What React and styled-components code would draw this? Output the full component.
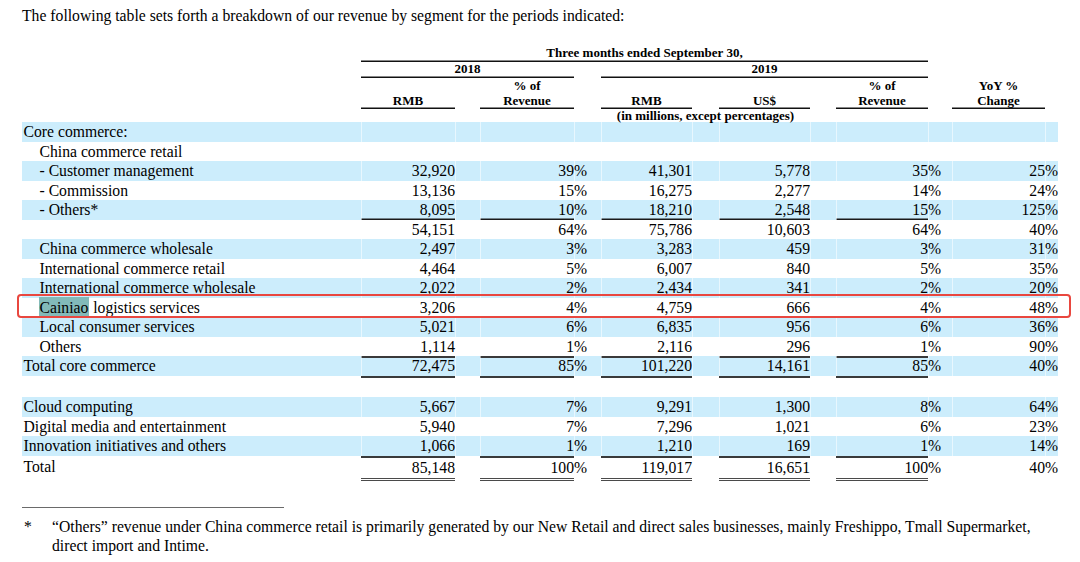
import React from 'react';
import styled, { createGlobalStyle } from 'styled-components';

const GlobalStyle = createGlobalStyle`
  html, body {
    margin: 0;
    padding: 0;
    background: #fff;
  }
  body {
    font-family: "Liberation Serif", "Times New Roman", serif;
    color: #000;
  }
`;

// label | c1 s1 | c2 s2 | c3 s3 | c4 s4 | c5 s5 | c6 s6
const COLS = '339px 94px 25px 94px 27px 91px 27px 91px 26px 92px 24px 93px 13px';

const Page = styled.div`
  width: 1080px;
  height: 562px;
  box-sizing: border-box;
  padding: 6px 22px 0;
  overflow: hidden;
`;

const Intro = styled.p`
  margin: 0 0 14px;
  font-size: 15.7px;
  line-height: 20px;
`;

const Table = styled.div`
  width: 1036px;
`;

const HeadRow = styled.div`
  display: grid;
  grid-template-columns: ${COLS};
  height: ${(p) => p.$h}px;
`;

const HeadCell = styled.div`
  grid-column: ${(p) => p.$col};
  display: flex;
  flex-direction: column;
  justify-content: ${(p) => (p.$middle ? 'center' : 'flex-end')};
  align-items: center;
  font-weight: bold;
  font-size: 13px;
  line-height: ${(p) => p.$lh || 14}px;
  padding-bottom: ${(p) => p.$pb || 0}px;
  white-space: nowrap;
  box-shadow: ${(p) => (p.$rule ? 'inset 0 -1.5px 0 #111' : 'none')};
`;

const Row = styled.div`
  display: grid;
  grid-template-columns: ${COLS};
  height: ${(p) => p.$h || 19.5}px;
  background: ${(p) => (p.$shaded ? '#ccedfc' : 'transparent')};
  position: ${(p) => (p.$marked ? 'relative' : 'static')};
  font-size: 15.7px;
  line-height: 19.5px;
`;

const Label = styled.div`
  padding-left: ${(p) => (p.$indent ? 17.5 : 1.5)}px;
  padding-top: ${(p) => (p.$grand ? 1 : 0)}px;
  white-space: nowrap;
`;

const cellShadow = ({ $seam, $top, $bottom }) => {
  const s = [];
  if ($seam) s.push('inset 1px 0 0 rgba(255, 255, 255, 0.55)');
  if ($top) s.push('inset 0 2px 0 #3a3a3a');
  if ($bottom === 'thin') s.push('inset 0 -1.5px 0 #1a1a1a');
  if ($bottom === 'out') s.push('0 2px 0 #3a3a3a');
  return s.length ? s.join(', ') : 'none';
};

const Num = styled.div`
  box-sizing: border-box;
  text-align: right;
  white-space: nowrap;
  padding-top: ${(p) => (p.$grand ? 2 : 0)}px;
  box-shadow: ${cellShadow};
  border-bottom: ${(p) => (p.$double ? '3px double #4a4a4a' : 'none')};
`;

const Sign = styled.div`
  text-align: left;
  white-space: nowrap;
  padding-top: ${(p) => (p.$grand ? 2 : 0)}px;
  box-shadow: ${cellShadow};
`;

const Mark = styled.span`
  background: #82bab9;
  padding: 2px 1px;
  margin-left: -1px;
`;

const Annotation = styled.div`
  position: absolute;
  top: -3.5px;
  bottom: -0.5px;
  left: -5px;
  right: -13px;
  border: 2px solid #e9473f;
  border-radius: 4px;
  pointer-events: none;
  z-index: 2;
`;

const FootRule = styled.div`
  width: 262px;
  margin-top: 26px;
  border-top: 1px solid #6a6a6a;
`;

const Footnote = styled.div`
  display: grid;
  grid-template-columns: 30px 1000px;
  margin-top: 9px;
  font-size: 15.7px;
  line-height: 19px;
`;

const Star = styled.span`
  padding-left: 2px;
`;

const rows = [
  { label: 'Core commerce:', shaded: true },
  { label: 'China commerce retail', indent: true },
  { label: '- Customer management', indent: true, shaded: true, v: ['32,920', '39', '41,301', '5,778', '35', '25'] },
  { label: '- Commission', indent: true, v: ['13,136', '15', '16,275', '2,277', '14', '24'] },
  { label: '- Others*', indent: true, shaded: true, rule: 'under', v: ['8,095', '10', '18,210', '2,548', '15', '125'] },
  { label: '', indent: true, v: ['54,151', '64', '75,786', '10,603', '64', '40'] },
  { label: 'China commerce wholesale', indent: true, shaded: true, v: ['2,497', '3', '3,283', '459', '3', '31'] },
  { label: 'International commerce retail', indent: true, v: ['4,464', '5', '6,007', '840', '5', '35'] },
  { label: 'International commerce wholesale', indent: true, shaded: true, v: ['2,022', '2', '2,434', '341', '2', '20'] },
  { label: 'logistics services', mark: 'Cainiao', indent: true, marked: true, v: ['3,206', '4', '4,759', '666', '4', '48'] },
  { label: 'Local consumer services', indent: true, shaded: true, v: ['5,021', '6', '6,835', '956', '6', '36'] },
  { label: 'Others', indent: true, v: ['1,114', '1', '2,116', '296', '1', '90'] },
  { label: 'Total core commerce', shaded: true, rule: 'subtotal', v: ['72,475', '85', '101,220', '14,161', '85', '40'] },
  { label: '', h: 21.5 },
  { label: 'Cloud computing', shaded: true, v: ['5,667', '7', '9,291', '1,300', '8', '64'] },
  { label: 'Digital media and entertainment', v: ['5,940', '7', '7,296', '1,021', '6', '23'] },
  { label: 'Innovation initiatives and others', shaded: true, v: ['1,066', '1', '1,210', '169', '1', '14'] },
  { label: 'Total', rule: 'grand', h: 25, v: ['85,148', '100', '119,017', '16,651', '100', '40'] },
];

const PCT = [false, true, false, false, true, true];

function DataRow({ row }) {
  const grand = row.rule === 'grand';
  const cells = [];
  for (let i = 0; i < 6; i++) {
    const ruled = i < 5;
    const val = row.v ? row.v[i] : '';
    cells.push(
      <Num
        key={'n' + i}
        $seam={row.shaded}
        $grand={grand}
        $top={ruled && (row.rule === 'subtotal' || grand)}
        $bottom={ruled ? (row.rule === 'under' ? 'thin' : row.rule === 'subtotal' ? 'out' : null) : null}
        $double={ruled && grand}
      >
        {val}
      </Num>
    );
    cells.push(
      <Sign key={'s' + i} $seam={row.shaded} $grand={grand}>
        {row.v && PCT[i] ? '%' : ''}
      </Sign>
    );
  }
  return (
    <Row $shaded={row.shaded} $h={row.h} $marked={row.marked}>
      <Label $indent={row.indent} $grand={grand}>
        {row.mark && (
          <>
            <Mark>{row.mark}</Mark>{' '}
          </>
        )}
        {row.label}
      </Label>
      {cells}
      {row.marked && <Annotation />}
    </Row>
  );
}

export default function App() {
  return (
    <Page>
      <GlobalStyle />
      <Intro>The following table sets forth a breakdown of our revenue by segment for the periods indicated:</Intro>
      <Table>
        <HeadRow $h={22}>
          <HeadCell $col="2 / 11" $pb={2} $rule>Three months ended September 30,</HeadCell>
        </HeadRow>
        <HeadRow $h={15.5}>
          <HeadCell $col="2 / 5" $pb={1.5} $rule>2018</HeadCell>
          <HeadCell $col="6 / 11" $pb={1.5} $rule>2019</HeadCell>
        </HeadRow>
        <HeadRow $h={31}>
          <HeadCell $col="2" $lh={15} $pb={1} $rule>RMB</HeadCell>
          <HeadCell $col="4" $lh={15} $pb={1} $rule>
            <span>% of</span>
            <span>Revenue</span>
          </HeadCell>
          <HeadCell $col="6" $lh={15} $pb={1} $rule>RMB</HeadCell>
          <HeadCell $col="8" $lh={15} $pb={1} $rule>US$</HeadCell>
          <HeadCell $col="10" $lh={15} $pb={1} $rule>
            <span>% of</span>
            <span>Revenue</span>
          </HeadCell>
          <HeadCell $col="12" $lh={15} $pb={1} $rule>
            <span>YoY %</span>
            <span>Change</span>
          </HeadCell>
        </HeadRow>
        <HeadRow $h={13.5}>
          <HeadCell $col="6 / 9" $lh={13.5} $middle>(in millions, except percentages)</HeadCell>
        </HeadRow>
        {rows.map((row, i) => (
          <DataRow key={i} row={row} />
        ))}
      </Table>
      <FootRule />
      <Footnote>
        <Star>*</Star>
        <span>
          “Others” revenue under China commerce retail is primarily generated by our New Retail and direct sales
          businesses, mainly Freshippo, Tmall Supermarket, direct import and Intime.
        </span>
      </Footnote>
    </Page>
  );
}
